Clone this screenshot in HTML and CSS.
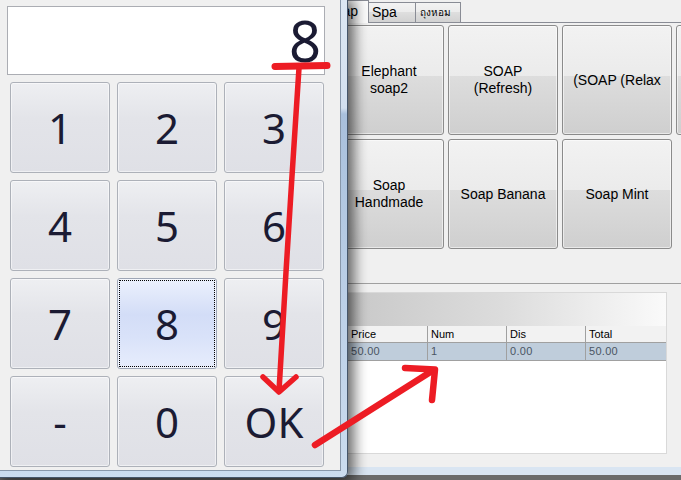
FILE: index.html
```html
<!DOCTYPE html>
<html>
<head>
<meta charset="utf-8">
<link rel="stylesheet" href="styles.css">
</head>
<body>
<div class="app">
  <div class="tabs">
    <div class="tab tab-soap active">Soap</div>
    <div class="tab tab-spa">Spa</div>
    <div class="tab tab-thai">ถุงหอม</div>
  </div>
  <div class="tabpage">
    <div class="product-grid">
      <div class="product">Elephant<br>soap2</div>
      <div class="product">SOAP<br>(Refresh)</div>
      <div class="product">(SOAP (Relax</div>
      <div class="product"></div>
      <div class="product">Soap<br>Handmade</div>
      <div class="product">Soap Banana</div>
      <div class="product">Soap Mint</div>
    </div>
  </div>
  <div class="lower">
    <div class="gridbox">
      <div class="caption"></div>
      <div class="row head">
        <div class="cell"></div>
        <div class="cell"></div>
        <div class="cell">Price</div>
        <div class="cell">Num</div>
        <div class="cell">Dis</div>
        <div class="cell">Total</div>
      </div>
      <div class="row data">
        <div class="cell"></div>
        <div class="cell"></div>
        <div class="cell">50.00</div>
        <div class="cell">1</div>
        <div class="cell">0.00</div>
        <div class="cell">50.00</div>
      </div>
    </div>
  </div>
  <div class="status"></div>
  <div class="taskbar"></div>
</div>

<div class="dialog">
  <div class="client">
    <div class="display">8</div>
    <div class="keypad">
      <div class="key">1</div>
      <div class="key">2</div>
      <div class="key">3</div>
      <div class="key">4</div>
      <div class="key">5</div>
      <div class="key">6</div>
      <div class="key">7</div>
      <div class="key focused">8</div>
      <div class="key">9</div>
      <div class="key">-</div>
      <div class="key">0</div>
      <div class="key">OK</div>
    </div>
  </div>
</div>

<svg class="annot" width="681" height="480" viewBox="0 0 681 480">
  <g fill="none" stroke="#ed1c24" stroke-linecap="round" stroke-linejoin="round">
    <path d="M275 66.5 L327 65.5" stroke-width="7"/>
    <path d="M299 68 L292 176 L286 272 L279 391" stroke-width="5.5"/>
    <path d="M263 377 L279 392 L296 377" stroke-width="5.5"/>
    <path d="M315 445 L432 371" stroke-width="6.5"/>
    <path d="M405 368 L435 369.5 L432 400" stroke-width="6.5"/>
  </g>
</svg>
</body>
</html>
```

FILE: styles.css
```css
html, body {
  margin: 0;
  padding: 0;
}

body {
  width: 681px;
  height: 480px;
  overflow: hidden;
  position: relative;
  background: #f0f0f0;
  font-family: "Liberation Sans", Arial, "Noto Sans", sans-serif;
}

/* ---------- main application (behind) ---------- */
.app {
  display: flex;
  flex-direction: column;
  height: 480px;
}

.tabs {
  display: flex;
  align-items: flex-end;
  height: 22px;
  padding-left: 318px;
}

.tab {
  box-sizing: border-box;
  height: 20px;
  border: 1px solid #898c95;
  border-bottom: none;
  margin-left: -1px;
  background: linear-gradient(#f3f3f3, #ebebeb 50%, #dedede 50%, #d2d2d2);
  font-size: 14px;
  line-height: 19px;
  color: #000;
  white-space: nowrap;
}

.tab.active {
  height: 23px;
  margin-bottom: -1px;
  background: #fbfbfb;
  position: relative;
  z-index: 1;
  line-height: 21px;
}

.tab-soap {
  width: 52px;
  text-align: right;
  padding-right: 10px;
}

.tab-spa {
  width: 48px;
  padding-left: 3px;
}

.tab-thai {
  width: 46px;
  padding-left: 4px;
  font-size: 10px;
  font-family: "Noto Sans", "DejaVu Sans", sans-serif;
}

.tabpage {
  border-top: 1px solid #898c95;
  border-bottom: 1px solid #a0a0a0;
  height: 258px;
  padding-top: 2px;
  overflow: hidden;
}

.product-grid {
  display: grid;
  grid-template-columns: repeat(4, 110px);
  grid-auto-rows: 110px;
  gap: 4px;
  padding-left: 334px;
}

.product {
  box-sizing: border-box;
  border: 1px solid #8b8b8b;
  border-radius: 3px;
  box-shadow: inset 0 0 0 1px rgba(255, 255, 255, 0.55);
  background: linear-gradient(#f2f2f2, #ebebeb 46%, #dddddd 46%, #cfcfcf);
  display: flex;
  align-items: center;
  justify-content: center;
  text-align: center;
  font-size: 14px;
  line-height: 17px;
  color: #000;
}

.lower {
  height: 183px;
  box-sizing: border-box;
  padding: 8px 14px 13px 8px;
}

.gridbox {
  height: 162px;
  box-sizing: border-box;
  border: 1px solid #d9d9d9;
  background: #fff;
}

.caption {
  height: 33px;
  background: linear-gradient(90deg, #9c9c9c 0%, #c9c9c9 52%, #dcdcdc 75%, #fafafa 100%);
}

.row {
  display: grid;
  grid-template-columns: 51px 288px 80px 79px 79px 1fr;
  font-size: 11px;
}

.row .cell {
  box-sizing: border-box;
  border-right: 1px solid #a0a0a0;
  padding-left: 3px;
  white-space: nowrap;
  overflow: hidden;
}

.row .cell:last-child {
  border-right: none;
}

.head {
  height: 17px;
  background: #f2f2f2;
  border-bottom: 1px solid #a0a0a0;
  box-sizing: border-box;
  line-height: 16px;
  color: #000;
}

.data {
  height: 18px;
  background: #bfcddb;
  border-bottom: 1px solid #a0a0a0;
  box-sizing: border-box;
  line-height: 17px;
  color: #4b5563;
  letter-spacing: 0.3px;
}

.status {
  height: 8px;
  background: #d9e5f2;
}

.taskbar {
  height: 5px;
  background: #6b6b6b;
}

/* ---------- keypad dialog (on top) ---------- */
.dialog {
  position: absolute;
  left: 0;
  top: 0;
  z-index: 2;
  box-sizing: border-box;
  width: 348px;
  height: 478px;
  padding: 0 6px 6px 0;
  background: linear-gradient(#dce7f3 0, #d3e0ef 108px, #a9c0dc 114px, #bcd0e7 300px, #cbdcef 100%);
  border-right: 1px solid #46566a;
  border-bottom: 1px solid #46566a;
  border-bottom-right-radius: 6px;
  box-shadow: 3px 2px 14px 3px rgba(0, 0, 0, 0.6);
}

.client {
  box-sizing: border-box;
  height: 100%;
  background: #f0f0f0;
  border-right: 1px solid #8897aa;
  border-bottom: 1px solid #8897aa;
  padding: 6px 0 0 7px;
}

.display {
  box-sizing: border-box;
  width: 318px;
  height: 69px;
  border: 1px solid #abadb3;
  background: #fff;
  text-align: right;
  padding: 5px 3px 0 0;
  font-family: "Noto Sans", sans-serif;
  font-size: 56px;
  line-height: 56px;
  color: #1b1b33;
}

.keypad {
  display: grid;
  grid-template-columns: repeat(3, 100px);
  grid-template-rows: repeat(4, 91px);
  gap: 7px;
  margin: 7px 0 0 3px;
}

.key {
  box-sizing: border-box;
  border: 1px solid #adb1b9;
  border-radius: 3px;
  box-shadow: inset 0 0 0 1px rgba(255, 255, 255, 0.5);
  background: linear-gradient(#eeeff2, #e3e4e9 40%, #dfe0e6);
  display: flex;
  align-items: center;
  justify-content: center;
  font-family: "Noto Sans", sans-serif;
  font-size: 42px;
  color: #1b1b33;
}

.key.focused {
  border-color: #9ea6b6;
  background: linear-gradient(#ecf1fd, #d3ddf7 40%, #d9e2f9 65%, #e7edfc);
  outline: 1px dotted #000;
  outline-offset: -3px;
}

/* ---------- red annotation overlay ---------- */
.annot {
  position: absolute;
  left: 0;
  top: 0;
  z-index: 3;
  pointer-events: none;
}
```
